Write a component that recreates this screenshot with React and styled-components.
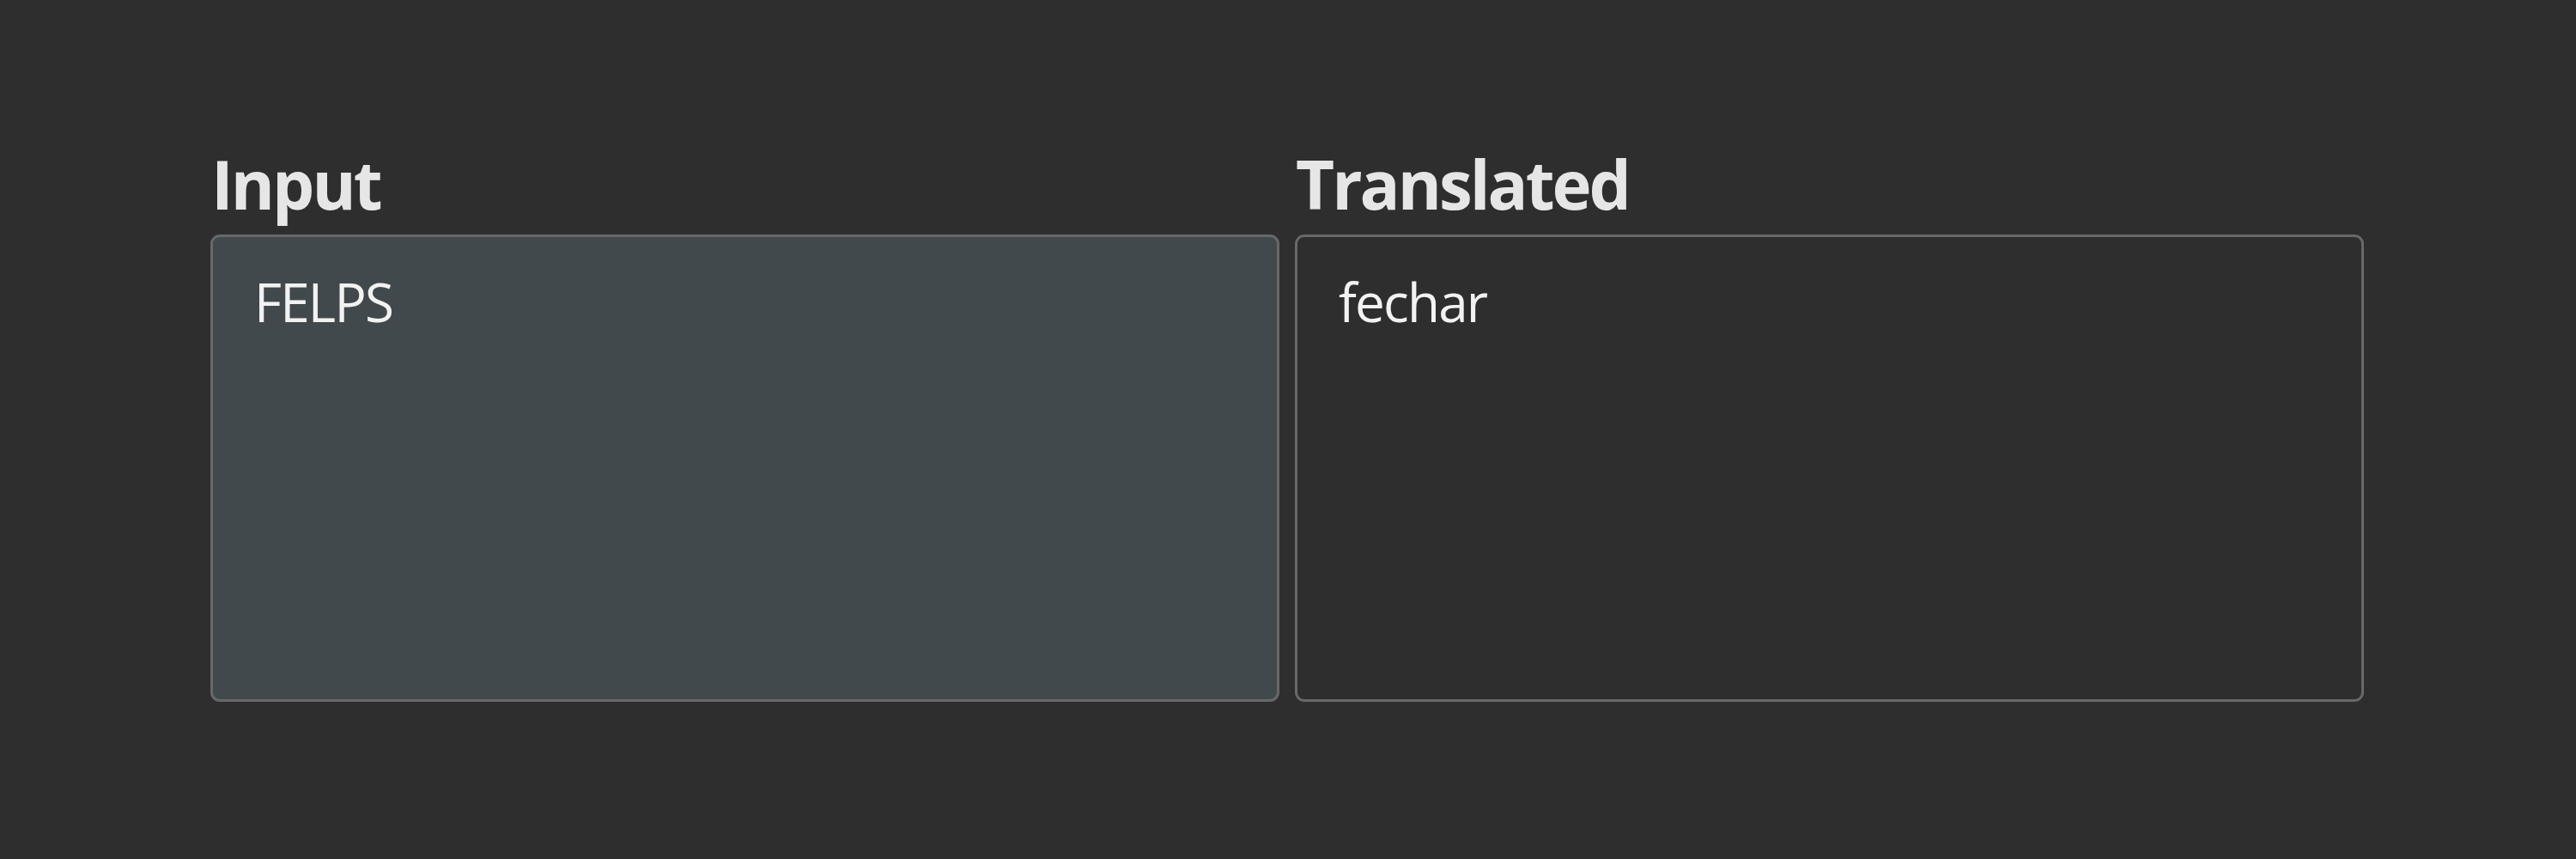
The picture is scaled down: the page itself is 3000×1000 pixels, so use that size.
import React from "react";
import styled, { createGlobalStyle } from "styled-components";

const Global = createGlobalStyle`
  html, body {
    margin: 0;
    padding: 0;
    background: #2e2e2e;
  }
  body {
    font-family: "Open Sans", "Noto Sans", sans-serif;
  }
`;

const Page = styled.main`
  width: 3000px;
  height: 1000px;
  box-sizing: border-box;
  padding: 174px 0 0 245px;
  background: #2e2e2e;
`;

const Row = styled.div`
  display: grid;
  grid-template-columns: 1245px 1245px;
  column-gap: 18px;
`;

const Panel = styled.section`
  display: flex;
  flex-direction: column;
`;

const Titulo = styled.h2`
  margin: 0 0 19px 1px;
  font-size: 78px;
  line-height: 80px;
  font-weight: 700;
  letter-spacing: -3px;
  color: #e6e6e6;
`;

const Caixa = styled.div`
  box-sizing: border-box;
  height: 544px;
  border: 3px solid #686868;
  border-radius: 11px;
  background: ${(p) => (p.ativo ? "#42494c" : "#2e2e2e")};
  padding: 38px 48px;
  font-size: 62px;
  line-height: 74px;
  letter-spacing: -1.8px;
  color: #f2f2f2;
`;

export default function App() {
  return (
    <Page>
      <Global />
      <Row>
        <Panel>
          <Titulo>Input</Titulo>
          <Caixa ativo>FELPS</Caixa>
        </Panel>
        <Panel>
          <Titulo>Translated</Titulo>
          <Caixa>fechar</Caixa>
        </Panel>
      </Row>
    </Page>
  );
}
